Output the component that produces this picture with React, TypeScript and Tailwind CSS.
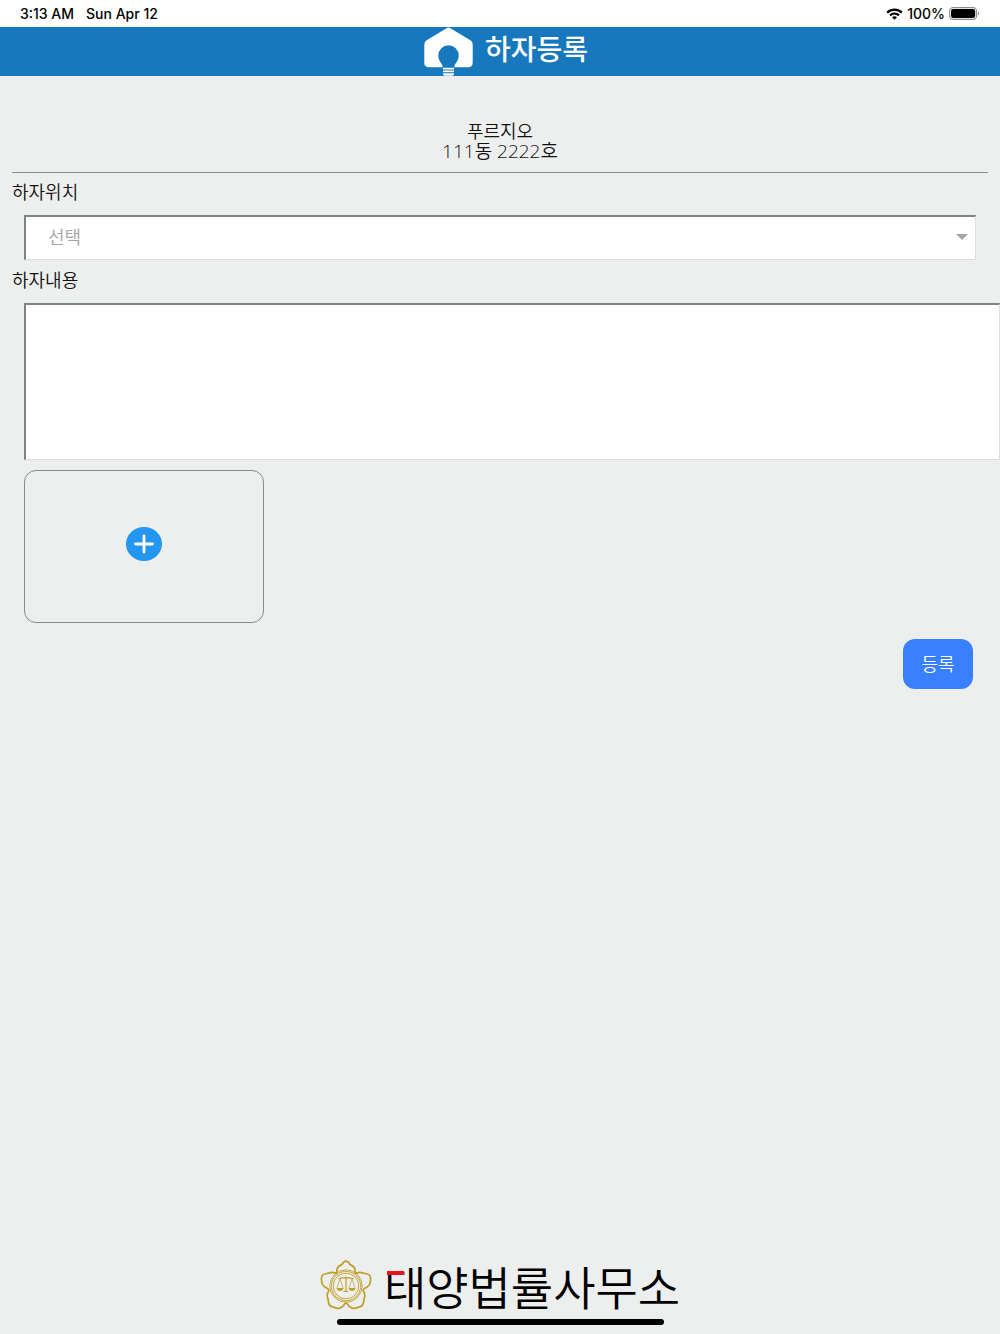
import React, { useState } from 'react';

const locations = ['거실', '주방', '침실', '욕실', '현관', '발코니'];

const StatusBar = () => (
  <div className="flex h-[27px] items-center justify-between bg-white px-5 font-['Inter',sans-serif] text-sm font-medium text-black">
    <div className="flex gap-3">
      <span>3:13 AM</span>
      <span>Sun Apr 12</span>
    </div>
    <div className="flex items-center gap-1">
      <svg width="17" height="12" viewBox="0 0 17 12" fill="none" stroke="currentColor" strokeWidth="2.2">
        <path d="M1.2 4.6C5.4 0.6 11.6 0.6 15.8 4.6" />
        <path d="M4 7.4C6.6 5 10.4 5 13 7.4" />
        <path d="M8.5 11.8L6 9.3C7.4 8 9.6 8 11 9.3Z" fill="currentColor" stroke="none" />
      </svg>
      <span>100%</span>
      <svg width="31" height="13" viewBox="0 0 31 13">
        <rect x="0.6" y="0.6" width="27" height="11.8" rx="3.6" fill="none" stroke="#8c8c8c" strokeWidth="1.1" />
        <rect x="2" y="2" width="24.2" height="9" rx="2.2" fill="#000" />
        <path d="M29 4.6C30.6 5.2 30.6 7.8 29 8.4Z" fill="#8c8c8c" />
      </svg>
    </div>
  </div>
);

const HouseLogo = () => (
  <svg className="h-[49px] w-[49px]" viewBox="0 0 49 49" fill="#fff">
    <path d="M22.6 1.2Q24.5 0 26.4 1.2L46.4 13.2Q48.7 14.8 48.7 17.5V35.5Q48.7 40.2 44 40.2H30.2C30.2 36.8 34.7 34.2 34.7 28.4A10.2 10.2 0 0 0 14.3 28.4C14.3 34.2 18.8 36.8 18.8 40.2H5Q0.3 40.2 0.3 35.5V17.5Q0.3 14.8 2.6 13.2Z" />
    <rect x="19" y="40.8" width="11" height="1.7" />
    <rect x="19" y="43.5" width="11" height="1.7" />
    <path d="M19 46.2H30V47Q30 48.7 28 48.7H21Q19 48.7 19 47Z" />
  </svg>
);

const Emblem = () => (
  <svg className="h-[50px] w-[52px]" viewBox="0 0 52 50" fill="none" stroke="#bf9f2a">
    <path
      strokeWidth="1.7"
      strokeLinejoin="round"
      d="M17 9.5C17.5 6 20.5 5.5 22 4.5C23 2.5 24.5 1.2 26 1.2C27.5 1.2 29 2.5 30 4.5C31.5 5.5 34.5 6 35 9.5C35.4 11 34.8 12.5 35.3 13C36 13.6 37.5 12.4 39.5 12.3C42 12.2 43 13.5 45.5 13.5C48 14 50 15 50.4 17C51 19 50 20.3 50.4 21.8C50.2 24.5 48.5 26.5 45 28.3C43.5 29.2 42.8 29.6 43.2 30.5C44 32.5 45.5 34 44.6 37C44 39 43.5 40 43.5 42.5C43 45 41.5 46.5 39.5 46.8C37 47.4 36 48.8 33.5 48.3C30.5 48 28.5 46 27.2 43.8C26.5 42.7 25.5 42.7 24.8 43.8C23.5 46 21.5 48 18.5 48.3C16 48.8 15 47.4 12.5 46.8C10.5 46.5 9 45 8.5 42.5C8.5 40 8 39 7.4 37C6.5 34 8 32.5 8.8 30.5C9.2 29.6 8.5 29.2 7 28.3C3.5 26.5 1.8 24.5 1.6 21.8C2 20.3 1 19 1.6 17C2 15 4 14 6.5 13.5C9 13.5 10 12.2 12.5 12.3C14.5 12.4 16 13.6 16.7 13C17.2 12.5 16.6 11 17 9.5Z"
    />
    <circle cx="26" cy="26" r="16.2" strokeWidth="0.9" />
    <circle cx="26" cy="26" r="14.6" strokeWidth="1.1" strokeDasharray="1.6 0.5" />
    <circle cx="26" cy="26" r="12.8" strokeWidth="0.9" />
    <path strokeWidth="1.2" d="M26 16.5V31M18.5 18.8Q26 16.500 33.5 18.8M23.5 31.500H28.5" />
    <path strokeWidth="0.7" d="M20 18.8L17 28M20 18.8L23 28M32 18.8L29 28M32 18.8L35 28" />
    <path fill="#bf9f2a" stroke="none" d="M16.500 28H23.500Q22.800 31 20 31Q17.200 31 16.500 28ZM28.500 28H35.500Q34.800 31 32 31Q29.200 31 28.500 28Z" />
  </svg>
);

export default function App() {
  const [location, setLocation] = useState('');
  const [content, setContent] = useState('');

  return (
    <div className="flex min-h-screen flex-col overflow-x-hidden bg-[#edefee] font-['Noto_Sans_CJK_KR',sans-serif] text-lg font-[350] text-[#111]">
      <StatusBar />
      <header className="flex h-[49px] items-center justify-center gap-3 bg-[#1878bd] pl-3">
        <HouseLogo />
        <h1 className="pb-2 text-[28px] leading-none font-medium text-white">하자등록</h1>
      </header>

      <main className="flex-1 px-3">
        <div className="border-b border-[#8a8c8b] pt-11 pb-[10px] text-center leading-[21px]">
          <p>푸르지오</p>
          <p className="font-['Open_Sans','Noto_Sans_CJK_KR',sans-serif] text-[19px]">111동 2222호</p>
        </div>

        <form onSubmit={(e) => e.preventDefault()}>
          <label htmlFor="location" className="flex h-[42px] items-center pb-1.5">하자위치</label>
          <div className="relative mx-3">
            <select
              id="location"
              value={location}
              onChange={(e) => setLocation(e.target.value)}
              className="block h-[45px] w-full appearance-none border-t-2 border-r border-b border-l-2 border-t-[#808281] border-r-[#dcdedd] border-b-[#dcdedd] border-l-[#808281] bg-white px-[22px] pb-1 text-[#a4a4a4] outline-none"
            >
              <option value="">선택</option>
              {locations.map((item) => (
                <option key={item} value={item}>{item}</option>
              ))}
            </select>
            <svg className="pointer-events-none absolute top-[19px] right-2" width="12" height="6" viewBox="0 0 12 6" fill="#a6a6a6">
              <path d="M0 0H12L6 6Z" />
            </svg>
          </div>

          <label htmlFor="content" className="flex h-[43px] items-center pb-1.5">하자내용</label>
          <div className="-mr-3 pl-3">
            <textarea
              id="content"
              value={content}
              onChange={(e) => setContent(e.target.value)}
              className="block h-[157px] w-full resize-none border-t-2 border-r border-b border-l-2 border-t-[#808281] border-r-[#dcdedd] border-b-[#dcdedd] border-l-[#808281] bg-white p-3 outline-none"
            />
          </div>

          <button
            type="button"
            aria-label="사진 추가"
            className="mt-[10px] ml-3 flex h-[153px] w-60 items-center justify-center rounded-xl border border-[#8a8c8b] pb-1.5"
          >
            <svg width="36" height="34" viewBox="0 0 36 34">
              <ellipse cx="18" cy="17" rx="18" ry="17" fill="#2196f3" />
              <path d="M18 9V25M9.5 17H26.5" stroke="#fff" strokeWidth="2.8" strokeLinecap="round" />
            </svg>
          </button>

          <div className="mt-4 mr-[15px] flex justify-end">
            <button type="submit" className="h-[50px] w-[70px] rounded-xl bg-[#3880ff] pb-0.5 text-white">
              등록
            </button>
          </div>
        </form>
      </main>

      <footer className="flex flex-col items-center gap-1 pb-[9px]">
        <div className="flex items-center gap-3">
          <Emblem />
          <div className="relative text-[46px] leading-[60px] text-black">
            태양법률사무소
            <span className="absolute top-4 left-[3px] h-1 w-[17px] bg-[#f01018]" />
          </div>
        </div>
        <div className="h-[6px] w-[327px] rounded-full bg-black" />
      </footer>
    </div>
  );
}
